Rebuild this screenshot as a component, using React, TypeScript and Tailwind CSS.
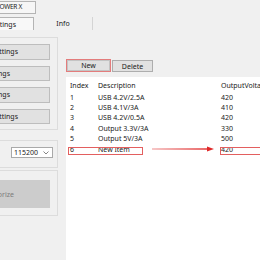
import React from "react";

const rows = [
  { idx: "1", desc: "USB 4.2V/2.5A", volt: "420" },
  { idx: "2", desc: "USB 4.1V/3A", volt: "410" },
  { idx: "3", desc: "USB 4.2V/0.5A", volt: "420" },
  { idx: "4", desc: "Output 3.3V/3A", volt: "330" },
  { idx: "5", desc: "Output 5V/3A", volt: "500" },
];

function SideButton({ label, pr }: { label: string; pr: string }) {
  return (
    <div
      className={`w-[50px] h-[15.5px] bg-[#e1e1e1] border border-l-0 border-[#bdbdbd] flex items-center justify-end whitespace-nowrap ${pr}`}
    >
      {label}
    </div>
  );
}

export default function App() {
  return (
    <div className="w-[260px] h-[260px] overflow-hidden bg-[#f0f0f0] text-[7px] leading-none text-[#1a1a1a] [font-family:'Noto_Sans',sans-serif] flex flex-col">
      {/* window tabs */}
      <div className="h-[14px] pt-[1px] shrink-0">
        <div className="w-[36px] h-[13px] border-t border-r border-b border-[#b4b4b4] bg-[#f6f6f6] flex items-center justify-end pr-[13px] whitespace-nowrap text-[6.5px] tracking-[-0.3px]">
          POWER X
        </div>
      </div>
      <div className="h-[16px] pt-[3px] flex shrink-0">
        <div className="w-[34px] h-[13px] border-t border-r border-[#b4b4b4] bg-[#f8f8f8] flex items-center justify-end pr-[17px] whitespace-nowrap">
          Settings
        </div>
        <div className="w-[59px] h-[13px] border-r border-[#d4d4d4] flex items-center justify-center">
          Info
        </div>
      </div>

      <div className="flex-1 flex min-h-0">
        {/* left panel */}
        <div className="w-[58px] shrink-0 flex flex-col">
          <div className="mt-[7px] h-[93px] border border-l-0 border-[#dcdcdc] pt-[6px] flex flex-col gap-[6px]">
            <SideButton label="Output Settings" pr="pr-[31px]" />
            <SideButton label="Readings" pr="pr-[39px]" />
            <SideButton label="Warnings" pr="pr-[39px]" />
            <SideButton label="Input Settings" pr="pr-[31px]" />
          </div>
          <div className="mt-[10px] h-[28px] border border-l-0 border-[#dcdcdc] pt-[6px] pl-[11px]">
            <div className="w-[42px] h-[11px] bg-white border border-[#a9a9a9] flex items-center justify-between pl-[2px] pr-[3px]">
              <span>115200</span>
              <svg width="6" height="4" viewBox="0 0 6 4">
                <path d="M0.5 0.5 L3 3 L5.5 0.5" fill="none" stroke="#666" strokeWidth="0.8" />
              </svg>
            </div>
          </div>
          <div className="mt-[2px] h-[46px] border border-l-0 border-[#dcdcdc] pt-[9px]">
            <div className="w-[50px] h-[28px] bg-[#cccccc] flex items-center justify-end pr-[36px] whitespace-nowrap text-[#7c7c7c]">
              Authorize
            </div>
          </div>
        </div>

        {/* right panel */}
        <div className="ml-[8px] flex-1 min-w-0 flex flex-col pt-[29px]">
          <div className="flex gap-[1px] h-[13px] shrink-0">
            <div className="border border-[#e37c7c]">
              <div className="w-[43px] h-[11px] bg-[#e1e1e1] border border-[#c4c4c4] flex items-center justify-center">
                New
              </div>
            </div>
            <div className="mt-[1px] w-[41px] h-[12px] bg-[#e1e1e1] border border-[#adadad] flex items-center justify-center">
              Delete
            </div>
          </div>

          <div className="mt-[5px] flex-1 bg-white pt-[3px]">
            <div className="flex h-[10px] items-center whitespace-nowrap">
              <div className="w-[32px] shrink-0 pl-[4px]">Index</div>
              <div className="w-[123px] shrink-0">Description</div>
              <div>OutputVoltage</div>
            </div>
            <div className="mt-[2px]">
              {rows.map((r) => (
                <div key={r.idx} className="flex h-[10.4px] items-center whitespace-nowrap">
                  <div className="w-[32px] shrink-0 pl-[4px]">{r.idx}</div>
                  <div className="w-[123px] shrink-0">{r.desc}</div>
                  <div>{r.volt}</div>
                </div>
              ))}
              <div className="relative flex h-[10.4px] items-center whitespace-nowrap">
                <div className="w-[32px] shrink-0 pl-[4px]">6</div>
                <div className="w-[123px] shrink-0">New Item</div>
                <div>420</div>
                <div className="absolute left-[2px] top-[2.7px] w-[75px] h-[8px] border border-[#e35f5f]" />
                <svg
                  className="absolute left-[86px] top-[2.3px]"
                  width="62"
                  height="6"
                  viewBox="0 0 62 6"
                >
                  <defs>
                    <linearGradient id="ar" x1="0" x2="1" y1="0" y2="0">
                      <stop offset="0" stopColor="#f3b0b0" />
                      <stop offset="1" stopColor="#e02828" />
                    </linearGradient>
                  </defs>
                  <rect x="0" y="2.3" width="56" height="1.4" fill="url(#ar)" />
                  <polygon points="55,0.6 62,3 55,5.4" fill="#e02828" />
                </svg>
                <div className="absolute left-[154px] top-[2.7px] w-[50px] h-[8px] border border-[#e35f5f]" />
              </div>
            </div>
          </div>
        </div>
      </div>
    </div>
  );
}
